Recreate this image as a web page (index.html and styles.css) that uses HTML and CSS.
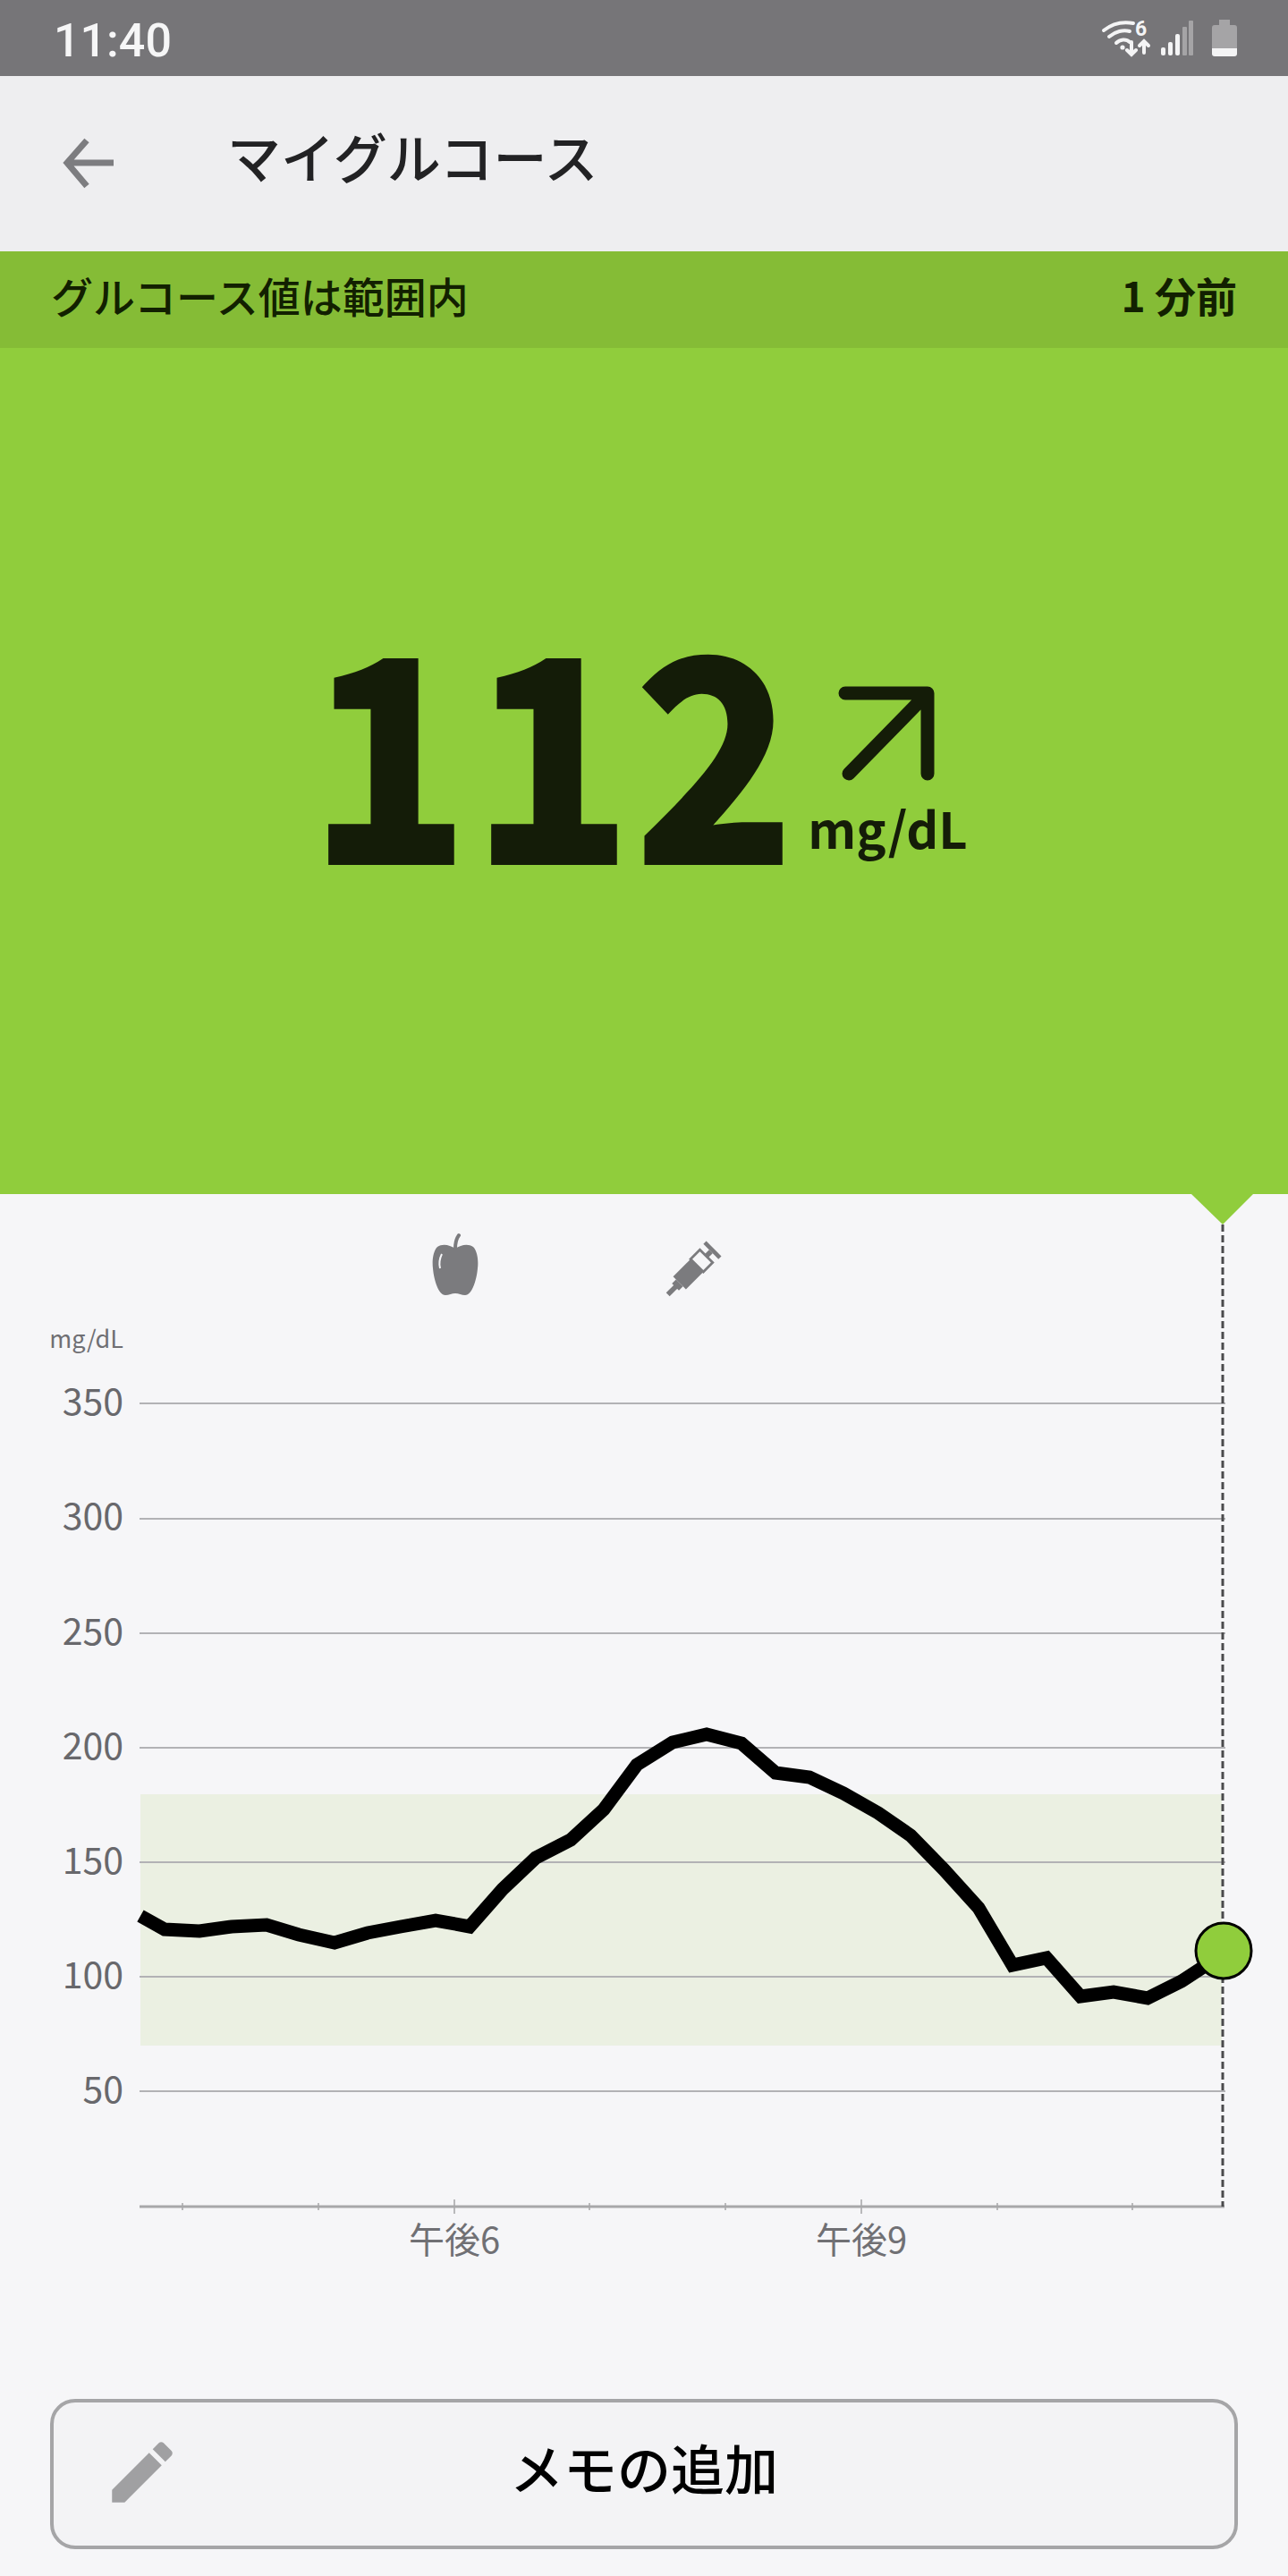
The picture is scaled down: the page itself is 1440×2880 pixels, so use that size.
FILE: index.html
```html
<!DOCTYPE html>
<html>
  <head>
    <meta charset="UTF-8">
    <title>マイグルコース</title>
    <link rel="stylesheet" href="styles.css">
  </head>
  <body>
    <div class="status-bar">
      <span class="clock">11:40</span>
      <svg class="status-icons" width="160" height="48" viewBox="1230 24 160 48">
        <g fill="none" stroke="#f4f4f5" stroke-width="4" stroke-linecap="round">
          <path d="M1234 39 C1244 31 1256 29 1267 31"/>
          <path d="M1240 46 C1247 40 1256 38 1263 40"/>
          <path d="M1248 53 C1252 49 1259 48 1263 52"/>
          <path d="M1265 52 V66 M1260 61 L1265 66 L1270 61"/>
          <path d="M1279 64 V51 M1274 56 L1279 51 L1284 56"/>
        </g>
        <circle cx="1255" cy="58" r="2.6" fill="#f4f4f5"/>
        <text class="wifi-six" x="1269" y="45">6</text>
        <rect x="1298" y="58" width="5" height="9" rx="2" fill="#f4f4f5"/>
        <rect x="1306" y="52" width="5" height="15" rx="2" fill="#f4f4f5"/>
        <rect x="1314" y="43" width="5" height="24" rx="2" fill="#f4f4f5"/>
        <rect x="1322" y="35" width="5" height="32" rx="1" fill="#a5a4a6"/>
        <rect x="1329" y="28" width="5" height="39" rx="1" fill="#a5a4a6"/>
        <path d="M1363 27 h12 v6 h5 a3 3 0 0 1 3 3 v23 h-28 v-23 a3 3 0 0 1 3 -3 h5 z" fill="#a5a4a6"/>
        <path d="M1355 59 h28 v6 a3 3 0 0 1 -3 3 h-22 a3 3 0 0 1 -3 -3 z" fill="#f4f4f5"/>
      </svg>
    </div>

    <div class="app-header">
      <svg class="back-arrow" width="58" height="58" viewBox="0 0 58 58">
        <path d="M57 28 H5 M27 3 L5 28 L27 54" fill="none" stroke="#7d7d80" stroke-width="7"/>
      </svg>
      <h1 class="title">マイグルコース</h1>
    </div>

    <div class="range-strip">
      <span>グルコース値は範囲内</span>
      <span class="age">1 分前</span>
    </div>

    <div class="reading">
      <div class="value">112</div>
      <div class="trend">
        <svg class="trend-arrow" width="112" height="112" viewBox="0 0 112 112">
          <path d="M8 8 H100 V98 M100 8 L12 98" fill="none" stroke="#141c08" stroke-width="15" stroke-linecap="round" stroke-linejoin="round"/>
        </svg>
        <div class="unit">mg/dL</div>
      </div>
    </div>

    <div class="chart-panel">
      <svg class="chart" width="1440" height="1347" viewBox="0 1335 1440 1347">
        <path d="M1332 1335 H1401 L1367 1369 Z" fill="#90cd3c"/>

        <!-- event markers -->
        <g fill="#7b7b7e">
          <path d="M509 1396 C503 1392 495 1390 489 1394 C484 1399 483 1410 484 1418 C485 1430 490 1448 498 1448 C502 1448 505 1446 509 1446 C513 1446 516 1448 520 1448 C528 1448 533 1430 534 1418 C535 1410 534 1399 529 1394 C523 1390 515 1392 509 1396 Z"/>
          <path d="M509 1396 C509 1390 510 1385 513 1381" fill="none" stroke="#7b7b7e" stroke-width="4" stroke-linecap="round"/>
          <path d="M494 1402 C491 1408 491 1414 492 1418" fill="none" stroke="#f6f6f8" stroke-width="2"/>
          <g transform="translate(774 1420) rotate(45) scale(0.92)">
            <rect x="-3" y="28" width="6" height="14"/>
            <rect x="-6" y="22" width="12" height="7"/>
            <rect x="-11" y="-8" width="22" height="30"/>
            <rect x="-11" y="-24" width="22" height="16" fill="none" stroke="#7b7b7e" stroke-width="3"/>
            <rect x="-3" y="-32" width="6" height="9"/>
            <rect x="-13" y="-37" width="26" height="5"/>
          </g>
        </g>

        <text class="unit-label" x="138" y="1507">mg/dL</text>

        <rect x="157" y="2006" width="1209" height="281" fill="#ebf0e2"/>

        <g stroke="#b2b2b5" stroke-width="2">
          <line x1="156" x2="1370" y1="1569" y2="1569"/>
          <line x1="156" x2="1370" y1="1698" y2="1698"/>
          <line x1="156" x2="1370" y1="1826" y2="1826"/>
          <line x1="156" x2="1370" y1="1954" y2="1954"/>
          <line x1="156" x2="1370" y1="2082" y2="2082"/>
          <line x1="156" x2="1370" y1="2210" y2="2210"/>
          <line x1="156" x2="1370" y1="2338" y2="2338"/>
        </g>

        <g class="y-labels">
          <text x="138" y="1582">350</text>
          <text x="138" y="1710">300</text>
          <text x="138" y="1839">250</text>
          <text x="138" y="1967">200</text>
          <text x="138" y="2095">150</text>
          <text x="138" y="2223">100</text>
          <text x="138" y="2351">50</text>
        </g>

        <!-- x axis -->
        <g stroke="#b9b9bb" stroke-width="2">
          <line x1="204" x2="204" y1="2463" y2="2471"/>
          <line x1="356" x2="356" y1="2463" y2="2471"/>
          <line x1="508" x2="508" y1="2459" y2="2475"/>
          <line x1="659" x2="659" y1="2463" y2="2471"/>
          <line x1="811" x2="811" y1="2463" y2="2471"/>
          <line x1="963" x2="963" y1="2459" y2="2475"/>
          <line x1="1115" x2="1115" y1="2463" y2="2471"/>
          <line x1="1266" x2="1266" y1="2463" y2="2471"/>
        </g>
        <line x1="156" x2="1369" y1="2467" y2="2467" stroke="#a8a8aa" stroke-width="3"/>
        <g class="x-labels">
          <text x="508" y="2519">午後6</text>
          <text x="963" y="2519">午後9</text>
        </g>

        <line x1="1367" x2="1367" y1="1369" y2="2467" stroke="#4a4a4c" stroke-width="3" stroke-dasharray="8 4"/>

        <polyline fill="none" stroke="#000" stroke-width="15" stroke-linejoin="miter"
          points="157,2142 184,2157 223,2159 259,2154 298,2152 334,2163 374,2172 411,2161 448,2154 487,2147 525,2154 562,2112 599,2077 638,2057 675,2023 712,1973 752,1948 790,1939 829,1949 867,1982 905,1987 943,2005 982,2027 1018,2052 1055,2090 1094,2133 1132,2197 1170,2189 1208,2232 1245,2227 1283,2234 1321,2215 1347,2198"/>
        <circle cx="1368" cy="2181" r="31" fill="#90cd3c" stroke="#000" stroke-width="3"/>
      </svg>

      <button class="memo-button" type="button">
        <svg class="memo-icon" width="90" height="90" viewBox="0 0 24 24">
          <path d="M3 17.25V21h3.75L17.81 9.94l-3.75-3.75L3 17.25zM20.71 7.04c.39-.39.39-1.02 0-1.41l-2.34-2.34c-.39-.39-1.02-.39-1.41 0l-1.83 1.83 3.75 3.75 1.83-1.83z" fill="#a0a0a2"/>
        </svg>
        メモの追加
      </button>
    </div>
  </body>
</html>
```

FILE: styles.css
```css
body {
  background-color: #f6f6f8;
  font-family: "Noto Sans CJK JP", "Noto Sans", sans-serif;
  margin: 0;
  padding: 0;
}

.status-bar {
  align-items: center;
  background-color: #767578;
  display: flex;
  height: 85px;
  justify-content: space-between;
  padding: 0 50px 0 60px;
}

.clock {
  color: #f6f6f7;
  font-family: Roboto, sans-serif;
  font-size: 52px;
  font-weight: 500;
  padding-top: 5px;
}

.wifi-six {
  fill: #f4f4f5;
  font-family: Roboto, sans-serif;
  font-size: 23px;
  font-weight: 700;
}

.app-header {
  align-items: center;
  background-color: #eeeef0;
  display: flex;
  height: 196px;
  padding-left: 70px;
}

.back-arrow {
  margin-right: 126px;
}

.title {
  color: #222224;
  font-size: 60px;
  font-weight: 500;
  margin: 0;
  padding-bottom: 19px;
}

.range-strip {
  align-items: center;
  background-color: #85bc36;
  box-sizing: border-box;
  color: #122000;
  display: flex;
  font-size: 47px;
  font-weight: 500;
  height: 108px;
  justify-content: space-between;
  padding: 0 57px 12px 57px;
}

.age {
  font-size: 46px;
  font-weight: 700;
}

.reading {
  align-items: flex-end;
  background-color: #90cd3c;
  box-sizing: border-box;
  color: #141c08;
  display: flex;
  height: 946px;
  justify-content: center;
  padding-bottom: 347px;
}

/* digits in the app are narrower than the black weight of the font */
.value {
  font-size: 318px;
  font-weight: 900;
  line-height: 1;
  margin-left: -34px;
  transform: scaleX(0.94);
  transform-origin: right;
}

.trend {
  display: flex;
  flex-direction: column;
  margin-bottom: 35px;
  margin-left: 13px;
  margin-right: 15px;
}

.trend-arrow {
  margin-bottom: 18px;
  margin-left: 34px;
}

.unit {
  font-size: 56px;
  font-weight: 700;
  line-height: 1;
}

.chart-panel {
  background-color: #f6f6f8;
  padding-bottom: 30px;
}

.chart {
  display: block;
}

.unit-label {
  fill: #6f6f73;
  font-size: 27px;
  text-anchor: end;
}

.y-labels text {
  fill: #68686c;
  font-size: 41px;
  text-anchor: end;
}

.x-labels text {
  fill: #707074;
  font-size: 40px;
  text-anchor: middle;
}

.memo-button {
  align-items: center;
  background-color: #f3f3f5;
  border: 4px solid #a5a5a7;
  border-radius: 28px;
  box-sizing: border-box;
  color: #000;
  display: flex;
  font-family: inherit;
  font-size: 60px;
  font-weight: 500;
  height: 168px;
  justify-content: center;
  margin: 0 56px;
  padding-bottom: 19px;
  position: relative;
  width: 1328px;
}

.memo-icon {
  left: 54px;
  position: absolute;
  top: 33px;
}
```
